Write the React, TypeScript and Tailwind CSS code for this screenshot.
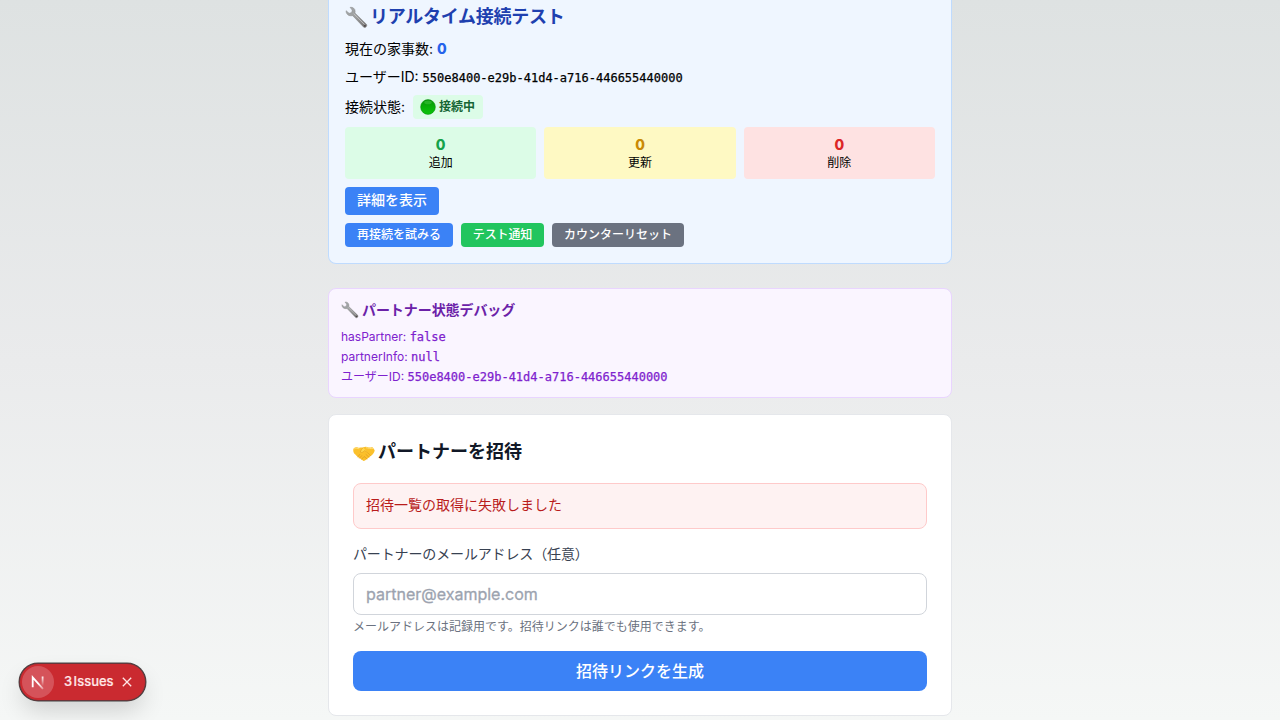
import React from "react";

function Wrench({ className }: { className: string }) {
  return (
    <svg viewBox="0 0 24 24" className={className} aria-hidden="true">
      <defs>
        <linearGradient id="steel" x1="0" y1="0" x2="1" y2="1">
          <stop offset="0" stopColor="#a9aeb0" />
          <stop offset="0.5" stopColor="#999b9c" />
          <stop offset="1" stopColor="#6f6c6c" />
        </linearGradient>
      </defs>
      <path
        d="M5.3 1.4 C8 .8 10.7 2.8 10.6 5.6 L10.4 7.3 L22.4 19.1 C23.7 20.7 21.4 23.5 19.5 22.1 L8 10.1 L6.5 10.2 C3.3 10.4.8 7.8 1.2 4.9 L4.3 7.6 L7 6.9 L7.5 4.3 Z"
        fill="url(#steel)"
        stroke="#858585"
        strokeWidth=".5"
      />
      <path d="M9 8 L20.3 19.3" stroke="#c4c4c4" strokeWidth=".9" />
      <circle cx="20.7" cy="20.7" r="1" fill="#4b4546" />
    </svg>
  );
}

function Handshake() {
  return (
    <svg viewBox="0 0 22 22" className="h-[22px] w-[22px] shrink-0" aria-hidden="true">
      <path
        d="M.4 6.8 C1.8 5.4 3.3 5 4.8 5.6 C6.8 6.1 8.3 5.3 10.2 5.6 C12.1 4.4 14 4.9 15.6 5.5 C17.4 6 18.7 4.7 20 5.7 L21.7 8.2 C21.5 10.6 19.6 12.7 17.7 14 C15.8 15.7 13.7 17.6 11.5 18.8 C10.1 19.4 9.5 18 8.2 17.2 L5.1 15.2 C3.6 14 2.8 12.7 1.4 11.7 C.2 10.5.1 8.2.4 6.8Z"
        fill="#fbc02b"
      />
      <path d="M10.2 5.6 C8.8 6.8 7.9 8.3 7.2 10 C9 11.1 10.6 9.7 11.7 8.5 C13.4 9.6 15.8 11.4 17.5 13.7" fill="#ffd64d" stroke="#dd9c22" strokeWidth=".6" />
      <path d="M4.7 15 L6.8 12.4 M6.5 16.2 L8.7 13.7 M8.5 17.4 L10.6 15 M11.3 14.6 L14 17 M13 12.5 L16 15.2" stroke="#d79020" strokeWidth=".6" fill="none" strokeLinecap="round" />
      <path d="M1.2 6.9 C3 5.6 4.3 6.7 6.3 6.7 M13 5.7 C15.5 6 17.5 7 20 6.4" stroke="#ffe07a" strokeWidth=".9" fill="none" />
    </svg>
  );
}

function GreenCircle() {
  return (
    <svg viewBox="0 0 16 16" className="mr-[3px] -ml-px h-4 w-4 shrink-0" aria-hidden="true">
      <defs>
        <linearGradient id="green" x1="0" y1="0" x2="0" y2="1">
          <stop offset="0" stopColor="#079407" />
          <stop offset="0.5" stopColor="#08b008" />
          <stop offset="1" stopColor="#0ac40a" />
        </linearGradient>
      </defs>
      <circle cx="8" cy="8" r="7.4" fill="url(#green)" stroke="#078c0c" strokeWidth=".5" />
      <ellipse cx="8" cy="3.4" rx="3.8" ry="1.8" fill="#45c745" opacity=".5" />
    </svg>
  );
}

const counters = [
  { label: "追加", box: "bg-[#dcfce7]", num: "text-[#16a34a]" },
  { label: "更新", box: "bg-[#fef9c3]", num: "text-[#ca8a04]" },
  { label: "削除", box: "bg-[#fee2e2]", num: "text-[#dc2626]" },
];

const userId = "550e8400-e29b-41d4-a716-446655440000";
const mono = "font-['DejaVu_Sans_Mono',monospace] text-xs [-webkit-text-stroke:0.25px_currentColor]";

function RealtimeCard() {
  return (
    <section className="h-[264px] rounded-b-lg border border-t-0 border-[#bfdbfe] bg-[#eff6ff] px-4 pt-[3px] text-sm text-black">
      <h3 className="mb-2 flex h-7 items-center text-lg font-bold text-[#1e40af]">
        <Wrench className="mr-[2px] h-[23px] w-[23px] shrink-0" />
        <span className="tracking-[-0.015em]">リアルタイム接続テスト</span>
      </h3>
      <div className="space-y-2">
        <p className="h-5 leading-5">
          現在の家事数: <span className="font-extrabold text-[#2563eb]">0</span>
        </p>
        <p className="h-5 leading-5">
          ユーザーID: <span className={mono}>{userId}</span>
        </p>
        <div className="flex h-6 items-center">
          <span>接続状態:</span>
          <span className="ml-2 flex h-6 items-center rounded bg-[#dcfce7] px-2 text-xs font-semibold text-[#166534]">
            <GreenCircle />
            接続中
          </span>
        </div>
        <div className="grid grid-cols-3 gap-2 text-center">
          {counters.map((c) => (
            <div key={c.label} className={`h-[52px] rounded p-2 ${c.box}`}>
              <div className={`h-5 text-sm leading-5 font-extrabold ${c.num}`}>0</div>
              <div className="text-xs leading-4">{c.label}</div>
            </div>
          ))}
        </div>
        <button className="block h-7 rounded bg-[#3b82f6] px-3 pb-0.5 text-sm font-medium text-white">詳細を表示</button>
        <div className="flex gap-2 text-xs font-medium text-white">
          <button className="h-6 rounded bg-[#3b82f6] px-3">再接続を試みる</button>
          <button className="h-6 w-[83px] rounded bg-[#22c55e] text-center tracking-[-0.01em]">テスト通知</button>
          <button className="h-6 rounded bg-[#6b7280] px-3">カウンターリセット</button>
        </div>
      </div>
    </section>
  );
}

function PartnerDebug() {
  return (
    <section className="mt-6 h-[110px] rounded-lg border border-[#e9d5ff] bg-[#faf5ff] p-3 text-xs text-[#7e22ce]">
      <h4 className="mb-2 flex h-5 items-center pb-0.5 text-sm font-bold text-[#6b21a8]">
        <Wrench className="mr-[3px] h-[18px] w-[18px] shrink-0" />
        <span className="tracking-[-0.005em]">パートナー状態デバッグ</span>
      </h4>
      <div className="space-y-1">
        <p className="h-4 leading-4">hasPartner: <span className={mono}>false</span></p>
        <p className="h-4 leading-4">partnerInfo: <span className={mono}>null</span></p>
        <p className="h-4 leading-4">ユーザーID: <span className={mono}>{userId}</span></p>
      </div>
    </section>
  );
}

function InviteCard() {
  return (
    <section className="mt-4 h-[302px] rounded-lg border border-[#e5e7eb] bg-white p-6">
      <h2 className="mb-4 flex h-7 items-center text-lg font-semibold text-[#111827]">
        <Handshake />
        <span className="ml-[3px] pb-0.5">パートナーを招待</span>
      </h2>
      <div className="rounded-lg border border-[#fecaca] bg-[#fef2f2] px-3 pt-[11px] pb-[13px] text-sm text-[#b91c1c]">
        招待一覧の取得に失敗しました
      </div>
      <label htmlFor="email" className="mt-[15px] mb-[9px] block h-5 text-sm tracking-[-0.01em] text-[#374151]">
        パートナーのメールアドレス（任意）
      </label>
      <input
        id="email"
        type="email"
        placeholder="partner@example.com"
        className="block h-[42px] w-full rounded-lg border border-[#d1d5db] px-3 text-base placeholder:text-[#9ca3af] placeholder:[-webkit-text-stroke:0.3px_#9ca3af]"
      />
      <p className="mt-1 h-4 text-xs text-[#6b7280]">メールアドレスは記録用です。招待リンクは誰でも使用できます。</p>
      <button className="mt-4 block h-10 w-full rounded-lg bg-[#3b82f6] text-base font-medium text-white">
        招待リンクを生成
      </button>
    </section>
  );
}

function IssuesBadge() {
  return (
    <div className="absolute bottom-[19px] left-[19px] flex h-[38px] w-[127px] items-center rounded-full border border-[#65363a] bg-[#ca2a30] pl-0.5 text-[13px] font-medium text-[#ffe6e6] shadow-[0_0_0_0.5px_#444,0_12px_24px_-3px_rgba(0,0,0,0.16)]">
      <span className="flex h-8 w-8 items-center justify-center rounded-full bg-[#d5535a]">
        <svg viewBox="0 0 16 16" className="h-4 w-4" fill="none" aria-hidden="true">
          <defs>
            <linearGradient id="stem" x1="0" y1="2" x2="0" y2="11" gradientUnits="userSpaceOnUse">
              <stop stopColor="white" />
              <stop offset="1" stopColor="white" stopOpacity="0.1" />
            </linearGradient>
            <linearGradient id="diag" x1="9" y1="9" x2="14" y2="15" gradientUnits="userSpaceOnUse">
              <stop stopColor="white" />
              <stop offset="1" stopColor="white" stopOpacity="0.3" />
            </linearGradient>
          </defs>
          <path d="M2.7 13.2 V3.3 L13 14.8" stroke="url(#diag)" strokeWidth="1.8" />
          <path d="M12.6 2.5 V11.5" stroke="url(#stem)" strokeWidth="1.8" />
        </svg>
      </span>
      <span className="ml-[10px] whitespace-nowrap [-webkit-text-stroke:0.2px_currentColor] [word-spacing:-2px]">3 Issues</span>
      <svg viewBox="0 0 10 10" className="ml-2 h-2.5 w-2.5" aria-hidden="true">
        <path d="M.8.8 9.2 9.2M9.2.8.8 9.2" stroke="currentColor" strokeWidth="1.3" />
      </svg>
    </div>
  );
}

export default function App() {
  return (
    <div className="relative h-[720px] w-[1280px] overflow-hidden bg-linear-to-b from-[#dee2e2] via-[#eaebec] via-50% to-[#f5f7f6] font-[Inter,'Noto_Sans_CJK_JP',sans-serif]">
      <main className="mx-auto w-[624px]">
        <RealtimeCard />
        <PartnerDebug />
        <InviteCard />
      </main>
      <IssuesBadge />
    </div>
  );
}
